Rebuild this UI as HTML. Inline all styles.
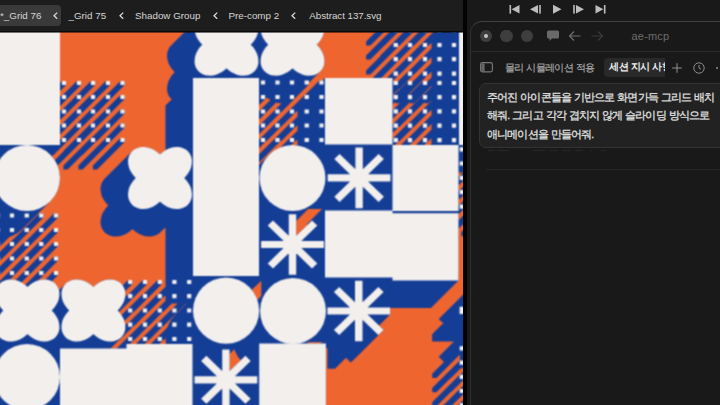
<!DOCTYPE html>
<html lang="ko">
<head>
<meta charset="utf-8">
<title>ae-mcp</title>
<style>
html,body{margin:0;padding:0;}
body{width:720px;height:405px;overflow:hidden;background:#191919;position:relative;font-family:"Liberation Sans",sans-serif;color:#e6e6e6;}
.abs{position:absolute;}
#topbar{left:0;top:0;width:463px;height:32px;background:#1d1d1d;}
#topline{left:0;top:31px;width:463px;height:1px;background:#090909;}
#topline2{left:0;top:32px;width:463px;height:1px;background:rgba(9,9,9,0.55);}
#topbar .tab{position:absolute;top:0;height:32px;line-height:32px;font-size:9.8px;color:#d6d6d6;white-space:nowrap;}
#topbar .chev{position:absolute;top:11.8px;width:5px;height:7.4px;}
#activetab{left:-6px;top:4.6px;width:66.7px;height:21.1px;border-radius:4px;background:#3a3a3a;}
.art{position:absolute;left:0;top:32px;display:block;}
#gutter{left:463px;top:0;width:3.9px;height:405px;background:#030303;}
#rtop{left:466.9px;top:0;width:254px;height:405px;background:#191919;}
#win{left:469.7px;top:20.7px;width:270px;height:400px;border:1px solid #303030;border-top-color:#424242;border-radius:12px;background:#191919;box-sizing:border-box;}
#hdrline{left:470px;top:51px;width:250px;height:1px;background:#2b2b2b;}
.tl{position:absolute;width:12.5px;height:12.5px;border-radius:50%;background:#3e3e3e;top:29.5px;}
#title{left:631.5px;top:29px;font-size:11px;line-height:14px;color:#6c6c6c;letter-spacing:0.2px;}
#tab1{left:505px;top:60.6px;font-size:9.6px;line-height:14px;color:#a6a6a6;white-space:nowrap;letter-spacing:-0.7px;word-spacing:0.8px;-webkit-text-stroke:0.2px #a6a6a6;}
#tab2bg{left:604px;top:58px;width:61.3px;height:19.2px;border-radius:4px 0 0 4px;background:#292929;overflow:hidden;}
#tab2{left:5.2px;top:2.4px;font-size:9.5px;line-height:14px;color:#f0f0f0;font-weight:bold;white-space:nowrap;letter-spacing:-0.6px;word-spacing:0.8px;}
#msg{left:479px;top:83px;width:260px;height:65px;border:1px solid #333;border-radius:7px;background:#222;box-sizing:border-box;}
#msgtext{left:487px;top:88px;width:240px;font-size:10.6px;line-height:18.25px;color:#e4e4e4;white-space:nowrap;letter-spacing:-0.86px;word-spacing:0.8px;-webkit-text-stroke:0.25px #e4e4e4;}
#faint{left:486px;top:169px;width:234px;height:1px;background:#272727;}
.fm{position:absolute;top:149.6px;height:1.6px;background:#282828;}
</style>
</head>
<body>
<div id="topbar" class="abs">
  <div id="activetab" class="abs"></div>
  <div class="tab" style="left:0px">*_Grid 76</div>
  <svg class="chev" style="left:52.6px" viewBox="0 0 5 7.4"><path d="M4.2 0.6L1 3.7L4.2 6.8" fill="none" stroke="#dcdcdc" stroke-width="1.25"/></svg>
  <div class="tab" style="left:68.5px">_Grid 75</div>
  <svg class="chev" style="left:118.6px" viewBox="0 0 5 7.4"><path d="M4.2 0.6L1 3.7L4.2 6.8" fill="none" stroke="#dcdcdc" stroke-width="1.25"/></svg>
  <div class="tab" style="left:135px">Shadow Group</div>
  <svg class="chev" style="left:212.6px" viewBox="0 0 5 7.4"><path d="M4.2 0.6L1 3.7L4.2 6.8" fill="none" stroke="#dcdcdc" stroke-width="1.25"/></svg>
  <div class="tab" style="left:228.5px">Pre-comp 2</div>
  <svg class="chev" style="left:290.6px" viewBox="0 0 5 7.4"><path d="M4.2 0.6L1 3.7L4.2 6.8" fill="none" stroke="#dcdcdc" stroke-width="1.25"/></svg>
  <div class="tab" style="left:309.3px;letter-spacing:-0.05px">Abstract 137.svg</div>
</div>
<svg class="art" width="463" height="373" viewBox="0 32 463 373">
<defs><filter id="soft" x="-5%" y="-5%" width="110%" height="110%" color-interpolation-filters="sRGB"><feConvolveMatrix order="3" kernelMatrix="1 2 1 2 4 2 1 2 1" divisor="16" edgeMode="duplicate" preserveAlpha="true"/></filter></defs>
<g filter="url(#soft)">
<rect x="-20" y="12" width="503" height="413" fill="#ee6530"/>
<g fill="#143d96" stroke="#143d96" stroke-linecap="round">
<path stroke="none" d="M-33.5 39.5 -6 12 60 12 60 145 32.5 172.5 -33.5 172.5ZM165.5 105.5 193 78 259 78 259 276 231.5 303.5 165.5 303.5ZM297.5 105.5 325 78 392.5 78 392.5 144.5 365 172 297.5 172ZM365 172.5 392.5 145 458.5 145 458.5 211 431 238.5 365 238.5ZM297.5 238 325 210.5 392.5 210.5 392.5 277.5 365 305 297.5 305ZM365 240.8 392.5 213.3 458.5 213.3 458.5 280.5 431 308 365 308ZM32.5 376 60 348.5 126.5 348.5 126.5 415 99 442.5 32.5 442.5ZM99 371.5 126.5 344 192.5 344 192.5 415 165 442.5 99 442.5ZM231.8 371.1 259.2 343.6 325.9 343.6 325.9 415 298.4 442.5 231.8 442.5ZM431.5 39.5 459 12 525 12 525 145 497.5 172.5 431.5 172.5ZM167.1 56.6 167.1 54 167.6 51.5 168.5 49.2 169.7 47.1 171.3 45.3 198.8 17.8 200.6 16.3 202.8 15.1 205.2 14.2 207.8 13.8 210.5 13.7 213.3 14 216.1 14.7 218.8 15.8 221.5 17.2 224 19 226.3 21 228.4 23.2 230.2 25.7 231.6 28.2 232.7 30.9 233.5 33.6 233.8 36.3 233.7 39 233.3 41.5 232.4 43.8 231.2 45.9 229.6 47.7 202.1 75.2 200.2 76.7 198.1 77.9 195.7 78.8 193.1 79.2 190.4 79.3 187.6 78.9 184.8 78.2 182 77.2 179.4 75.8 176.9 74 174.5 72 172.5 69.8 170.7 67.3 169.2 64.7 168.1 62.1 167.4 59.3ZM167.1 87.8 167.4 85.1 168.1 82.3 169.2 79.7 170.7 77.1 172.5 74.6 174.5 72.4 202 44.9 204.4 42.9 206.9 41.1 209.5 39.7 212.3 38.7 215.1 38 217.9 37.6 220.6 37.7 223.2 38.1 225.6 39 227.7 40.2 229.6 41.7 231.2 43.5 232.4 45.6 233.3 47.9 233.7 50.4 233.8 53.1 233.5 55.8 232.7 58.5 231.6 61.2 230.2 63.7 228.4 66.2 226.3 68.4 198.8 95.9 196.5 97.9 194 99.7 191.3 101.1 188.6 102.2 185.8 102.9 183 103.2 180.3 103.1 177.7 102.7 175.3 101.8 173.1 100.6 171.3 99.1 169.7 97.3 168.5 95.2 167.6 92.9 167.1 90.4ZM191.7 63.8 192 61.1 192.8 58.4 193.9 55.7 195.3 53.2 197.1 50.7 199.2 48.5 226.7 21 229 19 231.5 17.2 234.2 15.8 236.9 14.7 239.7 14 242.5 13.7 245.2 13.8 247.8 14.2 250.2 15.1 252.4 16.3 254.2 17.8 255.8 19.6 257 21.7 257.9 24 258.4 26.5 258.4 29.1 258.1 31.8 257.4 34.6 256.3 37.2 254.8 39.8 253 42.3 251 44.5 223.5 72 221.1 74 218.6 75.8 216 77.2 213.2 78.2 210.4 78.9 207.6 79.3 204.9 79.2 202.3 78.8 199.9 77.9 197.8 76.7 195.9 75.2 194.3 73.4 193.1 71.3 192.2 69 191.8 66.5ZM191.7 80.6 191.8 77.9 192.2 75.4 193.1 73.1 194.3 71 195.9 69.2 223.4 41.7 225.3 40.2 227.4 39 229.8 38.1 232.4 37.7 235.1 37.6 237.9 38 240.7 38.7 243.5 39.7 246.1 41.1 248.6 42.9 251 44.9 253 47.1 254.8 49.6 256.3 52.2 257.4 54.8 258.1 57.6 258.4 60.3 258.4 62.9 257.9 65.4 257 67.7 255.8 69.8 254.2 71.6 226.7 99.1 224.9 100.6 222.7 101.8 220.3 102.7 217.7 103.1 215 103.2 212.2 102.9 209.4 102.2 206.7 101.1 204 99.7 201.5 97.9 199.2 95.9 197.1 93.7 195.3 91.2 193.9 88.7 192.8 86 192 83.3ZM233.1 56.6 233.1 54 233.6 51.5 234.5 49.2 235.7 47.1 237.3 45.3 264.8 17.8 266.6 16.3 268.8 15.1 271.2 14.2 273.8 13.8 276.5 13.7 279.3 14 282.1 14.7 284.8 15.8 287.5 17.2 290 19 292.3 21 294.4 23.2 296.2 25.7 297.6 28.2 298.7 30.9 299.5 33.6 299.8 36.3 299.7 39 299.3 41.5 298.4 43.8 297.2 45.9 295.6 47.7 268.1 75.2 266.2 76.7 264.1 77.9 261.7 78.8 259.1 79.2 256.4 79.3 253.6 78.9 250.8 78.2 248 77.2 245.4 75.8 242.9 74 240.5 72 238.5 69.8 236.7 67.3 235.2 64.7 234.1 62.1 233.4 59.3ZM233.1 87.8 233.4 85.1 234.1 82.3 235.2 79.7 236.7 77.1 238.5 74.6 240.5 72.4 268 44.9 270.4 42.9 272.9 41.1 275.5 39.7 278.3 38.7 281.1 38 283.9 37.6 286.6 37.7 289.2 38.1 291.6 39 293.7 40.2 295.6 41.7 297.2 43.5 298.4 45.6 299.3 47.9 299.7 50.4 299.8 53.1 299.5 55.8 298.7 58.5 297.6 61.2 296.2 63.7 294.4 66.2 292.3 68.4 264.8 95.9 262.5 97.9 260 99.7 257.3 101.1 254.6 102.2 251.8 102.9 249 103.2 246.3 103.1 243.7 102.7 241.3 101.8 239.1 100.6 237.3 99.1 235.7 97.3 234.5 95.2 233.6 92.9 233.1 90.4ZM257.7 63.8 258 61.1 258.8 58.4 259.9 55.7 261.3 53.2 263.1 50.7 265.2 48.5 292.7 21 295 19 297.5 17.2 300.2 15.8 302.9 14.7 305.7 14 308.5 13.7 311.2 13.8 313.8 14.2 316.2 15.1 318.4 16.3 320.2 17.8 321.8 19.6 323 21.7 323.9 24 324.4 26.5 324.4 29.1 324.1 31.8 323.4 34.6 322.3 37.2 320.8 39.8 319 42.3 317 44.5 289.5 72 287.1 74 284.6 75.8 282 77.2 279.2 78.2 276.4 78.9 273.6 79.3 270.9 79.2 268.3 78.8 265.9 77.9 263.8 76.7 261.9 75.2 260.3 73.4 259.1 71.3 258.2 69 257.8 66.5ZM257.7 80.6 257.8 77.9 258.2 75.4 259.1 73.1 260.3 71 261.9 69.2 289.4 41.7 291.3 40.2 293.4 39 295.8 38.1 298.4 37.7 301.1 37.6 303.9 38 306.7 38.7 309.5 39.7 312.1 41.1 314.6 42.9 317 44.9 319 47.1 320.8 49.6 322.3 52.2 323.4 54.8 324.1 57.6 324.4 60.3 324.4 62.9 323.9 65.4 323 67.7 321.8 69.8 320.2 71.6 292.7 99.1 290.9 100.6 288.7 101.8 286.3 102.7 283.7 103.1 281 103.2 278.2 102.9 275.4 102.2 272.7 101.1 270 99.7 267.5 97.9 265.2 95.9 263.1 93.7 261.3 91.2 259.9 88.7 258.8 86 258 83.3ZM100.6 189.9 100.6 187.3 101.1 184.8 102 182.5 103.2 180.4 104.8 178.6 132.3 151.1 134.1 149.6 136.3 148.4 138.7 147.5 141.3 147.1 144 147 146.8 147.3 149.6 148 152.3 149.1 155 150.5 157.5 152.3 159.8 154.3 161.9 156.5 163.7 159 165.1 161.5 166.2 164.2 167 166.9 167.3 169.6 167.2 172.3 166.8 174.8 165.9 177.1 164.7 179.2 163.1 181 135.6 208.5 133.7 210 131.6 211.2 129.2 212.1 126.6 212.5 123.9 212.6 121.1 212.2 118.3 211.5 115.5 210.5 112.9 209.1 110.4 207.3 108 205.3 106 203.1 104.2 200.6 102.7 198 101.6 195.4 100.9 192.6ZM100.6 221.1 100.9 218.4 101.6 215.6 102.7 213 104.2 210.4 106 207.9 108 205.7 135.5 178.2 137.9 176.2 140.4 174.4 143 173 145.8 172 148.6 171.3 151.4 170.9 154.1 171 156.7 171.4 159.1 172.3 161.2 173.5 163.1 175 164.7 176.8 165.9 178.9 166.8 181.2 167.2 183.7 167.3 186.4 167 189.1 166.2 191.8 165.1 194.5 163.7 197 161.9 199.5 159.8 201.7 132.3 229.2 130 231.2 127.5 233 124.8 234.4 122.1 235.5 119.3 236.2 116.5 236.5 113.8 236.4 111.2 236 108.8 235.1 106.6 233.9 104.8 232.4 103.2 230.6 102 228.5 101.1 226.2 100.6 223.7ZM125.2 197.1 125.5 194.4 126.3 191.7 127.4 189 128.8 186.5 130.6 184 132.7 181.8 160.2 154.3 162.5 152.3 165 150.5 167.7 149.1 170.4 148 173.2 147.3 176 147 178.7 147.1 181.3 147.5 183.7 148.4 185.9 149.6 187.7 151.1 189.3 152.9 190.5 155 191.4 157.3 191.9 159.8 191.9 162.4 191.6 165.1 190.9 167.9 189.8 170.5 188.3 173.1 186.5 175.6 184.5 177.8 157 205.3 154.6 207.3 152.1 209.1 149.5 210.5 146.7 211.5 143.9 212.2 141.1 212.6 138.4 212.5 135.8 212.1 133.4 211.2 131.3 210 129.4 208.5 127.8 206.7 126.6 204.6 125.7 202.3 125.3 199.8ZM125.2 213.9 125.3 211.2 125.7 208.7 126.6 206.4 127.8 204.3 129.4 202.5 156.9 175 158.8 173.5 160.9 172.3 163.3 171.4 165.9 171 168.6 170.9 171.4 171.3 174.2 172 177 173 179.6 174.4 182.1 176.2 184.5 178.2 186.5 180.4 188.3 182.9 189.8 185.5 190.9 188.1 191.6 190.9 191.9 193.6 191.9 196.2 191.4 198.7 190.5 201 189.3 203.1 187.7 204.9 160.2 232.4 158.4 233.9 156.2 235.1 153.8 236 151.2 236.4 148.5 236.5 145.7 236.2 142.9 235.5 140.2 234.4 137.5 233 135 231.2 132.7 229.2 130.6 227 128.8 224.5 127.4 222 126.3 219.3 125.5 216.6ZM-31.9 322.4 -31.9 319.8 -31.4 317.3 -30.5 315 -29.3 312.9 -27.7 311.1 -0.2 283.6 1.6 282.1 3.8 280.9 6.2 280 8.8 279.6 11.5 279.5 14.3 279.8 17.1 280.5 19.8 281.6 22.5 283 25 284.8 27.3 286.8 29.4 289 31.2 291.5 32.6 294 33.7 296.7 34.5 299.4 34.8 302.1 34.7 304.8 34.3 307.3 33.4 309.6 32.2 311.7 30.6 313.5 3.1 341 1.2 342.5 -0.9 343.7 -3.3 344.6 -5.9 345 -8.6 345.1 -11.4 344.7 -14.2 344 -17 343 -19.6 341.6 -22.1 339.8 -24.5 337.8 -26.5 335.6 -28.3 333.1 -29.8 330.5 -30.9 327.9 -31.6 325.1ZM-31.9 353.6 -31.6 350.9 -30.9 348.1 -29.8 345.5 -28.3 342.9 -26.5 340.4 -24.5 338.2 3 310.7 5.4 308.7 7.9 306.9 10.5 305.5 13.3 304.5 16.1 303.8 18.9 303.4 21.6 303.5 24.2 303.9 26.6 304.8 28.7 306 30.6 307.5 32.2 309.3 33.4 311.4 34.3 313.7 34.7 316.2 34.8 318.9 34.5 321.6 33.7 324.3 32.6 327 31.2 329.5 29.4 332 27.3 334.2 -0.2 361.7 -2.5 363.7 -5 365.5 -7.7 366.9 -10.4 368 -13.2 368.7 -16 369 -18.7 368.9 -21.3 368.5 -23.7 367.6 -25.9 366.4 -27.7 364.9 -29.3 363.1 -30.5 361 -31.4 358.7 -31.9 356.2ZM-7.3 329.6 -7 326.9 -6.2 324.2 -5.1 321.5 -3.7 319 -1.9 316.5 0.2 314.3 27.7 286.8 30 284.8 32.5 283 35.2 281.6 37.9 280.5 40.7 279.8 43.5 279.5 46.2 279.6 48.8 280 51.2 280.9 53.4 282.1 55.2 283.6 56.8 285.4 58 287.5 58.9 289.8 59.4 292.3 59.4 294.9 59.1 297.6 58.4 300.4 57.3 303 55.8 305.6 54 308.1 52 310.3 24.5 337.8 22.1 339.8 19.6 341.6 17 343 14.2 344 11.4 344.7 8.6 345.1 5.9 345 3.3 344.6 0.9 343.7 -1.2 342.5 -3.1 341 -4.7 339.2 -5.9 337.1 -6.8 334.8 -7.2 332.3ZM-7.3 346.4 -7.2 343.7 -6.8 341.2 -5.9 338.9 -4.7 336.8 -3.1 335 24.4 307.5 26.3 306 28.4 304.8 30.8 303.9 33.4 303.5 36.1 303.4 38.9 303.8 41.7 304.5 44.5 305.5 47.1 306.9 49.6 308.7 52 310.7 54 312.9 55.8 315.4 57.3 318 58.4 320.6 59.1 323.4 59.4 326.1 59.4 328.7 58.9 331.2 58 333.5 56.8 335.6 55.2 337.4 27.7 364.9 25.9 366.4 23.7 367.6 21.3 368.5 18.7 368.9 16 369 13.2 368.7 10.4 368 7.7 366.9 5 365.5 2.5 363.7 0.2 361.7 -1.9 359.5 -3.7 357 -5.1 354.5 -6.2 351.8 -7 349.1ZM34 322.4 34 319.8 34.5 317.3 35.4 315 36.6 312.9 38.2 311.1 65.7 283.6 67.5 282.1 69.7 280.9 72.1 280 74.7 279.6 77.4 279.5 80.2 279.8 83 280.5 85.7 281.6 88.4 283 90.9 284.8 93.2 286.8 95.3 289 97.1 291.5 98.5 294 99.6 296.7 100.4 299.4 100.7 302.1 100.6 304.8 100.2 307.3 99.3 309.6 98.1 311.7 96.5 313.5 69 341 67.1 342.5 65 343.7 62.6 344.6 60 345 57.3 345.1 54.5 344.7 51.7 344 48.9 343 46.3 341.6 43.8 339.8 41.4 337.8 39.4 335.6 37.6 333.1 36.1 330.5 35 327.9 34.3 325.1ZM34 353.6 34.3 350.9 35 348.1 36.1 345.5 37.6 342.9 39.4 340.4 41.4 338.2 68.9 310.7 71.3 308.7 73.8 306.9 76.4 305.5 79.2 304.5 82 303.8 84.8 303.4 87.5 303.5 90.1 303.9 92.5 304.8 94.6 306 96.5 307.5 98.1 309.3 99.3 311.4 100.2 313.7 100.6 316.2 100.7 318.9 100.4 321.6 99.6 324.3 98.5 327 97.1 329.5 95.3 332 93.2 334.2 65.7 361.7 63.4 363.7 60.9 365.5 58.2 366.9 55.5 368 52.7 368.7 49.9 369 47.2 368.9 44.6 368.5 42.2 367.6 40 366.4 38.2 364.9 36.6 363.1 35.4 361 34.5 358.7 34 356.2ZM58.6 329.6 58.9 326.9 59.7 324.2 60.8 321.5 62.2 319 64 316.5 66.1 314.3 93.6 286.8 95.9 284.8 98.4 283 101.1 281.6 103.8 280.5 106.6 279.8 109.4 279.5 112.1 279.6 114.7 280 117.1 280.9 119.3 282.1 121.1 283.6 122.7 285.4 123.9 287.5 124.8 289.8 125.3 292.3 125.3 294.9 125 297.6 124.3 300.4 123.2 303 121.7 305.6 119.9 308.1 117.9 310.3 90.4 337.8 88 339.8 85.5 341.6 82.9 343 80.1 344 77.3 344.7 74.5 345.1 71.8 345 69.2 344.6 66.8 343.7 64.7 342.5 62.8 341 61.2 339.2 60 337.1 59.1 334.8 58.7 332.3ZM58.6 346.4 58.7 343.7 59.1 341.2 60 338.9 61.2 336.8 62.8 335 90.3 307.5 92.2 306 94.3 304.8 96.7 303.9 99.3 303.5 102 303.4 104.8 303.8 107.6 304.5 110.4 305.5 113 306.9 115.5 308.7 117.9 310.7 119.9 312.9 121.7 315.4 123.2 318 124.3 320.6 125 323.4 125.3 326.1 125.3 328.7 124.8 331.2 123.9 333.5 122.7 335.6 121.1 337.4 93.6 364.9 91.8 366.4 89.6 367.6 87.2 368.5 84.6 368.9 81.9 369 79.1 368.7 76.3 368 73.6 366.9 70.9 365.5 68.4 363.7 66.1 361.7 64 359.5 62.2 357 60.8 354.5 59.7 351.8 58.9 349.1ZM300.2 201.8 327.7 174.3 390.5 174.3 390.5 181.5 363 209 300.2 209ZM306.8 186.5 334.3 159 339.6 153.9 383.9 196.8 356.4 224.3 351.1 229.4ZM327.9 175.1 355.4 147.6 362.8 147.6 362.8 208.2 335.3 235.7 327.9 235.7ZM306.8 224.3 334.3 196.8 378.6 153.9 383.9 159 356.4 186.5 312.1 229.4ZM233.6 268.4 261.1 240.9 323.9 240.9 323.9 248.1 296.4 275.6 233.6 275.6ZM240.2 253.1 267.7 225.6 273 220.5 317.3 263.4 289.8 290.9 284.5 296ZM261.3 241.7 288.8 214.2 296.2 214.2 296.2 274.8 268.7 302.3 261.3 302.3ZM240.2 290.9 267.7 263.4 312 220.5 317.3 225.6 289.8 253.1 245.5 296ZM299.9 334.9 327.4 307.4 390.1 307.4 390.1 314.6 362.6 342.1 299.9 342.1ZM306.4 319.6 333.9 292.1 339.2 287 383.6 329.9 356.1 357.4 350.8 362.5ZM327.5 308.2 355 280.7 362.5 280.7 362.5 341.3 335 368.8 327.5 368.8ZM306.4 357.4 333.9 329.9 378.3 287 383.6 292.1 356.1 319.6 311.7 362.5ZM167 403.7 194.5 376.2 257.3 376.2 257.3 383.4 229.8 410.9 167 410.9ZM173.6 388.4 201.1 360.9 206.4 355.8 250.7 398.7 223.2 426.2 217.9 431.3ZM194.7 377 222.2 349.5 229.6 349.5 229.6 410.1 202.1 437.6 194.7 437.6ZM173.6 426.2 201.1 398.7 245.4 355.8 250.7 360.9 223.2 388.4 178.9 431.3ZM432.1 334.3 459.6 306.8 522.4 306.8 522.4 314 494.9 341.5 432.1 341.5ZM438.7 319 466.2 291.5 471.5 286.4 515.8 329.3 488.3 356.8 483 361.9ZM459.8 307.6 487.3 280.1 494.7 280.1 494.7 340.7 467.2 368.2 459.8 368.2ZM438.7 356.8 466.2 329.3 510.5 286.4 515.8 291.5 488.3 319 444 361.9ZM34.4 108.4 61.9 80.9 66.1 80.9 66.1 85.1 38.6 112.6 34.4 112.6ZM49.4 108.4 76.9 80.9 81.1 80.9 81.1 85.1 53.6 112.6 49.4 112.6ZM63.4 108.4 90.9 80.9 95.1 80.9 95.1 85.1 67.6 112.6 63.4 112.6ZM78.4 108.4 105.9 80.9 110.1 80.9 110.1 85.1 82.6 112.6 78.4 112.6ZM92.9 108.4 120.4 80.9 124.6 80.9 124.6 85.1 97.1 112.6 92.9 112.6ZM34.4 122.4 61.9 94.9 66.1 94.9 66.1 99.1 38.6 126.6 34.4 126.6ZM49.4 122.4 76.9 94.9 81.1 94.9 81.1 99.1 53.6 126.6 49.4 126.6ZM63.4 122.4 90.9 94.9 95.1 94.9 95.1 99.1 67.6 126.6 63.4 126.6ZM78.4 122.4 105.9 94.9 110.1 94.9 110.1 99.1 82.6 126.6 78.4 126.6ZM92.9 122.4 120.4 94.9 124.6 94.9 124.6 99.1 97.1 126.6 92.9 126.6ZM34.4 136.9 61.9 109.4 66.1 109.4 66.1 113.6 38.6 141.1 34.4 141.1ZM49.4 136.9 76.9 109.4 81.1 109.4 81.1 113.6 53.6 141.1 49.4 141.1ZM63.4 136.9 90.9 109.4 95.1 109.4 95.1 113.6 67.6 141.1 63.4 141.1ZM78.4 136.9 105.9 109.4 110.1 109.4 110.1 113.6 82.6 141.1 78.4 141.1ZM92.9 136.9 120.4 109.4 124.6 109.4 124.6 113.6 97.1 141.1 92.9 141.1ZM34.4 150.9 61.9 123.4 66.1 123.4 66.1 127.6 38.6 155.1 34.4 155.1ZM49.4 150.9 76.9 123.4 81.1 123.4 81.1 127.6 53.6 155.1 49.4 155.1ZM63.4 150.9 90.9 123.4 95.1 123.4 95.1 127.6 67.6 155.1 63.4 155.1ZM78.4 150.9 105.9 123.4 110.1 123.4 110.1 127.6 82.6 155.1 78.4 155.1ZM92.9 150.9 120.4 123.4 124.6 123.4 124.6 127.6 97.1 155.1 92.9 155.1ZM34.4 165.4 61.9 137.9 66.1 137.9 66.1 142.1 38.6 169.6 34.4 169.6ZM49.4 165.4 76.9 137.9 81.1 137.9 81.1 142.1 53.6 169.6 49.4 169.6ZM63.4 165.4 90.9 137.9 95.1 137.9 95.1 142.1 67.6 169.6 63.4 169.6ZM78.4 165.4 105.9 137.9 110.1 137.9 110.1 142.1 82.6 169.6 78.4 169.6ZM92.9 165.4 120.4 137.9 124.6 137.9 124.6 142.1 97.1 169.6 92.9 169.6ZM233.4 107.9 260.9 80.4 265.1 80.4 265.1 84.6 237.6 112.1 233.4 112.1ZM247.9 107.9 275.4 80.4 279.6 80.4 279.6 84.6 252.1 112.1 247.9 112.1ZM262.4 107.9 289.9 80.4 294.1 80.4 294.1 84.6 266.6 112.1 262.4 112.1ZM277.1 107.9 304.6 80.4 308.9 80.4 308.9 84.6 281.4 112.1 277.1 112.1ZM291.9 107.9 319.4 80.4 323.6 80.4 323.6 84.6 296.1 112.1 291.9 112.1ZM233.4 122.4 260.9 94.9 265.1 94.9 265.1 99.1 237.6 126.6 233.4 126.6ZM247.9 122.4 275.4 94.9 279.6 94.9 279.6 99.1 252.1 126.6 247.9 126.6ZM262.4 122.4 289.9 94.9 294.1 94.9 294.1 99.1 266.6 126.6 262.4 126.6ZM277.1 122.4 304.6 94.9 308.9 94.9 308.9 99.1 281.4 126.6 277.1 126.6ZM291.9 122.4 319.4 94.9 323.6 94.9 323.6 99.1 296.1 126.6 291.9 126.6ZM233.4 136.9 260.9 109.4 265.1 109.4 265.1 113.6 237.6 141.1 233.4 141.1ZM247.9 136.9 275.4 109.4 279.6 109.4 279.6 113.6 252.1 141.1 247.9 141.1ZM262.4 136.9 289.9 109.4 294.1 109.4 294.1 113.6 266.6 141.1 262.4 141.1ZM277.1 136.9 304.6 109.4 308.9 109.4 308.9 113.6 281.4 141.1 277.1 141.1ZM291.9 136.9 319.4 109.4 323.6 109.4 323.6 113.6 296.1 141.1 291.9 141.1ZM233.4 150.9 260.9 123.4 265.1 123.4 265.1 127.6 237.6 155.1 233.4 155.1ZM247.9 150.9 275.4 123.4 279.6 123.4 279.6 127.6 252.1 155.1 247.9 155.1ZM262.4 150.9 289.9 123.4 294.1 123.4 294.1 127.6 266.6 155.1 262.4 155.1ZM277.1 150.9 304.6 123.4 308.9 123.4 308.9 127.6 281.4 155.1 277.1 155.1ZM291.9 150.9 319.4 123.4 323.6 123.4 323.6 127.6 296.1 155.1 291.9 155.1ZM233.4 165.4 260.9 137.9 265.1 137.9 265.1 142.1 237.6 169.6 233.4 169.6ZM247.9 165.4 275.4 137.9 279.6 137.9 279.6 142.1 252.1 169.6 247.9 169.6ZM262.4 165.4 289.9 137.9 294.1 137.9 294.1 142.1 266.6 169.6 262.4 169.6ZM277.1 165.4 304.6 137.9 308.9 137.9 308.9 142.1 281.4 169.6 277.1 169.6ZM291.9 165.4 319.4 137.9 323.6 137.9 323.6 142.1 296.1 169.6 291.9 169.6ZM366.1 41.4 393.6 13.9 397.9 13.9 397.9 18.1 370.4 45.6 366.1 45.6ZM380.4 41.4 407.9 13.9 412.1 13.9 412.1 18.1 384.6 45.6 380.4 45.6ZM395.4 41.4 422.9 13.9 427.1 13.9 427.1 18.1 399.6 45.6 395.4 45.6ZM409.9 41.4 437.4 13.9 441.6 13.9 441.6 18.1 414.1 45.6 409.9 45.6ZM424.4 41.4 451.9 13.9 456.1 13.9 456.1 18.1 428.6 45.6 424.4 45.6ZM366.1 55.4 393.6 27.9 397.9 27.9 397.9 32.1 370.4 59.6 366.1 59.6ZM380.4 55.4 407.9 27.9 412.1 27.9 412.1 32.1 384.6 59.6 380.4 59.6ZM395.4 55.4 422.9 27.9 427.1 27.9 427.1 32.1 399.6 59.6 395.4 59.6ZM409.9 55.4 437.4 27.9 441.6 27.9 441.6 32.1 414.1 59.6 409.9 59.6ZM424.4 55.4 451.9 27.9 456.1 27.9 456.1 32.1 428.6 59.6 424.4 59.6ZM366.1 70.4 393.6 42.9 397.9 42.9 397.9 47.1 370.4 74.6 366.1 74.6ZM380.4 70.4 407.9 42.9 412.1 42.9 412.1 47.1 384.6 74.6 380.4 74.6ZM395.4 70.4 422.9 42.9 427.1 42.9 427.1 47.1 399.6 74.6 395.4 74.6ZM409.9 70.4 437.4 42.9 441.6 42.9 441.6 47.1 414.1 74.6 409.9 74.6ZM424.4 70.4 451.9 42.9 456.1 42.9 456.1 47.1 428.6 74.6 424.4 74.6ZM366.1 84.6 393.6 57.1 397.9 57.1 397.9 61.3 370.4 88.8 366.1 88.8ZM380.4 84.6 407.9 57.1 412.1 57.1 412.1 61.3 384.6 88.8 380.4 88.8ZM395.4 84.6 422.9 57.1 427.1 57.1 427.1 61.3 399.6 88.8 395.4 88.8ZM409.9 84.6 437.4 57.1 441.6 57.1 441.6 61.3 414.1 88.8 409.9 88.8ZM424.4 84.6 451.9 57.1 456.1 57.1 456.1 61.3 428.6 88.8 424.4 88.8ZM366.1 99 393.6 71.5 397.9 71.5 397.9 75.7 370.4 103.2 366.1 103.2ZM380.4 99 407.9 71.5 412.1 71.5 412.1 75.7 384.6 103.2 380.4 103.2ZM395.4 99 422.9 71.5 427.1 71.5 427.1 75.7 399.6 103.2 395.4 103.2ZM409.9 99 437.4 71.5 441.6 71.5 441.6 75.7 414.1 103.2 409.9 103.2ZM424.4 99 451.9 71.5 456.1 71.5 456.1 75.7 428.6 103.2 424.4 103.2ZM366.1 108.4 393.6 80.9 397.9 80.9 397.9 85.1 370.4 112.6 366.1 112.6ZM380.4 108.4 407.9 80.9 412.1 80.9 412.1 85.1 384.6 112.6 380.4 112.6ZM395.4 108.4 422.9 80.9 427.1 80.9 427.1 85.1 399.6 112.6 395.4 112.6ZM409.9 108.4 437.4 80.9 441.6 80.9 441.6 85.1 414.1 112.6 409.9 112.6ZM424.4 108.4 451.9 80.9 456.1 80.9 456.1 85.1 428.6 112.6 424.4 112.6ZM366.1 122.6 393.6 95.1 397.9 95.1 397.9 99.3 370.4 126.8 366.1 126.8ZM380.4 122.6 407.9 95.1 412.1 95.1 412.1 99.3 384.6 126.8 380.4 126.8ZM395.4 122.6 422.9 95.1 427.1 95.1 427.1 99.3 399.6 126.8 395.4 126.8ZM409.9 122.6 437.4 95.1 441.6 95.1 441.6 99.3 414.1 126.8 409.9 126.8ZM424.4 122.6 451.9 95.1 456.1 95.1 456.1 99.3 428.6 126.8 424.4 126.8ZM366.1 136.8 393.6 109.3 397.9 109.3 397.9 113.5 370.4 141 366.1 141ZM380.4 136.8 407.9 109.3 412.1 109.3 412.1 113.5 384.6 141 380.4 141ZM395.4 136.8 422.9 109.3 427.1 109.3 427.1 113.5 399.6 141 395.4 141ZM409.9 136.8 437.4 109.3 441.6 109.3 441.6 113.5 414.1 141 409.9 141ZM424.4 136.8 451.9 109.3 456.1 109.3 456.1 113.5 428.6 141 424.4 141ZM366.1 151.1 393.6 123.6 397.9 123.6 397.9 127.8 370.4 155.3 366.1 155.3ZM380.4 151.1 407.9 123.6 412.1 123.6 412.1 127.8 384.6 155.3 380.4 155.3ZM395.4 151.1 422.9 123.6 427.1 123.6 427.1 127.8 399.6 155.3 395.4 155.3ZM409.9 151.1 437.4 123.6 441.6 123.6 441.6 127.8 414.1 155.3 409.9 155.3ZM424.4 151.1 451.9 123.6 456.1 123.6 456.1 127.8 428.6 155.3 424.4 155.3ZM366.1 165.6 393.6 138.1 397.9 138.1 397.9 142.3 370.4 169.8 366.1 169.8ZM380.4 165.6 407.9 138.1 412.1 138.1 412.1 142.3 384.6 169.8 380.4 169.8ZM395.4 165.6 422.9 138.1 427.1 138.1 427.1 142.3 399.6 169.8 395.4 169.8ZM409.9 165.6 437.4 138.1 441.6 138.1 441.6 142.3 414.1 169.8 409.9 169.8ZM424.4 165.6 451.9 138.1 456.1 138.1 456.1 142.3 428.6 169.8 424.4 169.8ZM-32.1 240.9 -4.6 213.4 -0.4 213.4 -0.4 217.6 -27.9 245.1 -32.1 245.1ZM-17.6 240.9 9.9 213.4 14.1 213.4 14.1 217.6 -13.4 245.1 -17.6 245.1ZM-2.9 240.9 24.6 213.4 28.9 213.4 28.9 217.6 1.4 245.1 -2.9 245.1ZM11.7 240.9 39.1 213.4 43.4 213.4 43.4 217.6 15.8 245.1 11.7 245.1ZM26.4 240.9 53.9 213.4 58.1 213.4 58.1 217.6 30.6 245.1 26.4 245.1ZM-32.1 255.4 -4.6 227.9 -0.4 227.9 -0.4 232.1 -27.9 259.6 -32.1 259.6ZM-17.6 255.4 9.9 227.9 14.1 227.9 14.1 232.1 -13.4 259.6 -17.6 259.6ZM-2.9 255.4 24.6 227.9 28.9 227.9 28.9 232.1 1.4 259.6 -2.9 259.6ZM11.7 255.4 39.1 227.9 43.4 227.9 43.4 232.1 15.8 259.6 11.7 259.6ZM26.4 255.4 53.9 227.9 58.1 227.9 58.1 232.1 30.6 259.6 26.4 259.6ZM-32.1 269.4 -4.6 241.9 -0.4 241.9 -0.4 246.1 -27.9 273.6 -32.1 273.6ZM-17.6 269.4 9.9 241.9 14.1 241.9 14.1 246.1 -13.4 273.6 -17.6 273.6ZM-2.9 269.4 24.6 241.9 28.9 241.9 28.9 246.1 1.4 273.6 -2.9 273.6ZM11.7 269.4 39.1 241.9 43.4 241.9 43.4 246.1 15.8 273.6 11.7 273.6ZM26.4 269.4 53.9 241.9 58.1 241.9 58.1 246.1 30.6 273.6 26.4 273.6ZM-32.1 283.9 -4.6 256.4 -0.4 256.4 -0.4 260.6 -27.9 288.1 -32.1 288.1ZM-17.6 283.9 9.9 256.4 14.1 256.4 14.1 260.6 -13.4 288.1 -17.6 288.1ZM-2.9 283.9 24.6 256.4 28.9 256.4 28.9 260.6 1.4 288.1 -2.9 288.1ZM11.7 283.9 39.1 256.4 43.4 256.4 43.4 260.6 15.8 288.1 11.7 288.1ZM26.4 283.9 53.9 256.4 58.1 256.4 58.1 260.6 30.6 288.1 26.4 288.1ZM-32.1 298.4 -4.6 270.9 -0.4 270.9 -0.4 275.1 -27.9 302.6 -32.1 302.6ZM-17.6 298.4 9.9 270.9 14.1 270.9 14.1 275.1 -13.4 302.6 -17.6 302.6ZM-2.9 298.4 24.6 270.9 28.9 270.9 28.9 275.1 1.4 302.6 -2.9 302.6ZM11.7 298.4 39.1 270.9 43.4 270.9 43.4 275.1 15.8 302.6 11.7 302.6ZM26.4 298.4 53.9 270.9 58.1 270.9 58.1 275.1 30.6 302.6 26.4 302.6ZM100.6 307.4 128.1 279.9 132.3 279.9 132.3 284.1 104.8 311.6 100.6 311.6ZM115.4 307.4 142.9 279.9 147.1 279.9 147.1 284.1 119.6 311.6 115.4 311.6ZM130.2 307.4 157.7 279.9 161.9 279.9 161.9 284.1 134.4 311.6 130.2 311.6ZM144.8 307.4 172.3 279.9 176.5 279.9 176.5 284.1 149 311.6 144.8 311.6ZM159.6 307.4 187.1 279.9 191.3 279.9 191.3 284.1 163.8 311.6 159.6 311.6ZM100.6 321.6 128.1 294.1 132.3 294.1 132.3 298.3 104.8 325.8 100.6 325.8ZM115.4 321.6 142.9 294.1 147.1 294.1 147.1 298.3 119.6 325.8 115.4 325.8ZM130.2 321.6 157.7 294.1 161.9 294.1 161.9 298.3 134.4 325.8 130.2 325.8ZM144.8 321.6 172.3 294.1 176.5 294.1 176.5 298.3 149 325.8 144.8 325.8ZM159.6 321.6 187.1 294.1 191.3 294.1 191.3 298.3 163.8 325.8 159.6 325.8ZM100.6 335.9 128.1 308.4 132.3 308.4 132.3 312.6 104.8 340.1 100.6 340.1ZM115.4 335.9 142.9 308.4 147.1 308.4 147.1 312.6 119.6 340.1 115.4 340.1ZM130.2 335.9 157.7 308.4 161.9 308.4 161.9 312.6 134.4 340.1 130.2 340.1ZM144.8 335.9 172.3 308.4 176.5 308.4 176.5 312.6 149 340.1 144.8 340.1ZM159.6 335.9 187.1 308.4 191.3 308.4 191.3 312.6 163.8 340.1 159.6 340.1ZM100.6 350 128.1 322.5 132.3 322.5 132.3 326.7 104.8 354.2 100.6 354.2ZM115.4 350 142.9 322.5 147.1 322.5 147.1 326.7 119.6 354.2 115.4 354.2ZM130.2 350 157.7 322.5 161.9 322.5 161.9 326.7 134.4 354.2 130.2 354.2ZM144.8 350 172.3 322.5 176.5 322.5 176.5 326.7 149 354.2 144.8 354.2ZM159.6 350 187.1 322.5 191.3 322.5 191.3 326.7 163.8 354.2 159.6 354.2ZM100.6 364.4 128.1 336.9 132.3 336.9 132.3 341.1 104.8 368.6 100.6 368.6ZM115.4 364.4 142.9 336.9 147.1 336.9 147.1 341.1 119.6 368.6 115.4 368.6ZM130.2 364.4 157.7 336.9 161.9 336.9 161.9 341.1 134.4 368.6 130.2 368.6ZM144.8 364.4 172.3 336.9 176.5 336.9 176.5 341.1 149 368.6 144.8 368.6ZM159.6 364.4 187.1 336.9 191.3 336.9 191.3 341.1 163.8 368.6 159.6 368.6ZM432.2 174.7 459.7 147.2 463.9 147.2 463.9 151.4 436.4 178.9 432.2 178.9ZM446.8 174.7 474.3 147.2 478.5 147.2 478.5 151.4 451 178.9 446.8 178.9ZM461.4 174.7 488.9 147.2 493.1 147.2 493.1 151.4 465.6 178.9 461.4 178.9ZM475.9 174.7 503.4 147.2 507.6 147.2 507.6 151.4 480.1 178.9 475.9 178.9ZM490.4 174.7 517.9 147.2 522.1 147.2 522.1 151.4 494.6 178.9 490.4 178.9ZM432.2 188.9 459.7 161.4 463.9 161.4 463.9 165.6 436.4 193.1 432.2 193.1ZM446.8 188.9 474.3 161.4 478.5 161.4 478.5 165.6 451 193.1 446.8 193.1ZM461.4 188.9 488.9 161.4 493.1 161.4 493.1 165.6 465.6 193.1 461.4 193.1ZM475.9 188.9 503.4 161.4 507.6 161.4 507.6 165.6 480.1 193.1 475.9 193.1ZM490.4 188.9 517.9 161.4 522.1 161.4 522.1 165.6 494.6 193.1 490.4 193.1ZM432.2 203.2 459.7 175.7 463.9 175.7 463.9 179.9 436.4 207.4 432.2 207.4ZM446.8 203.2 474.3 175.7 478.5 175.7 478.5 179.9 451 207.4 446.8 207.4ZM461.4 203.2 488.9 175.7 493.1 175.7 493.1 179.9 465.6 207.4 461.4 207.4ZM475.9 203.2 503.4 175.7 507.6 175.7 507.6 179.9 480.1 207.4 475.9 207.4ZM490.4 203.2 517.9 175.7 522.1 175.7 522.1 179.9 494.6 207.4 490.4 207.4ZM432.2 217.6 459.7 190.1 463.9 190.1 463.9 194.3 436.4 221.8 432.2 221.8ZM446.8 217.6 474.3 190.1 478.5 190.1 478.5 194.3 451 221.8 446.8 221.8ZM461.4 217.6 488.9 190.1 493.1 190.1 493.1 194.3 465.6 221.8 461.4 221.8ZM475.9 217.6 503.4 190.1 507.6 190.1 507.6 194.3 480.1 221.8 475.9 221.8ZM490.4 217.6 517.9 190.1 522.1 190.1 522.1 194.3 494.6 221.8 490.4 221.8ZM432.2 232 459.7 204.5 463.9 204.5 463.9 208.7 436.4 236.2 432.2 236.2ZM446.8 232 474.3 204.5 478.5 204.5 478.5 208.7 451 236.2 446.8 236.2ZM461.4 232 488.9 204.5 493.1 204.5 493.1 208.7 465.6 236.2 461.4 236.2ZM475.9 232 503.4 204.5 507.6 204.5 507.6 208.7 480.1 236.2 475.9 236.2ZM490.4 232 517.9 204.5 522.1 204.5 522.1 208.7 494.6 236.2 490.4 236.2ZM432.2 373.8 459.7 346.3 463.9 346.3 463.9 350.5 436.4 378 432.2 378ZM446.8 373.8 474.3 346.3 478.5 346.3 478.5 350.5 451 378 446.8 378ZM461.4 373.8 488.9 346.3 493.1 346.3 493.1 350.5 465.6 378 461.4 378ZM475.9 373.8 503.4 346.3 507.6 346.3 507.6 350.5 480.1 378 475.9 378ZM490.4 373.8 517.9 346.3 522.1 346.3 522.1 350.5 494.6 378 490.4 378ZM432.2 388.1 459.7 360.6 463.9 360.6 463.9 364.8 436.4 392.3 432.2 392.3ZM446.8 388.1 474.3 360.6 478.5 360.6 478.5 364.8 451 392.3 446.8 392.3ZM461.4 388.1 488.9 360.6 493.1 360.6 493.1 364.8 465.6 392.3 461.4 392.3ZM475.9 388.1 503.4 360.6 507.6 360.6 507.6 364.8 480.1 392.3 475.9 392.3ZM490.4 388.1 517.9 360.6 522.1 360.6 522.1 364.8 494.6 392.3 490.4 392.3ZM432.2 402.2 459.7 374.7 463.9 374.7 463.9 378.9 436.4 406.4 432.2 406.4ZM446.8 402.2 474.3 374.7 478.5 374.7 478.5 378.9 451 406.4 446.8 406.4ZM461.4 402.2 488.9 374.7 493.1 374.7 493.1 378.9 465.6 406.4 461.4 406.4ZM475.9 402.2 503.4 374.7 507.6 374.7 507.6 378.9 480.1 406.4 475.9 406.4ZM490.4 402.2 517.9 374.7 522.1 374.7 522.1 378.9 494.6 406.4 490.4 406.4ZM432.2 416.4 459.7 388.9 463.9 388.9 463.9 393.1 436.4 420.6 432.2 420.6ZM446.8 416.4 474.3 388.9 478.5 388.9 478.5 393.1 451 420.6 446.8 420.6ZM461.4 416.4 488.9 388.9 493.1 388.9 493.1 393.1 465.6 420.6 461.4 420.6ZM475.9 416.4 503.4 388.9 507.6 388.9 507.6 393.1 480.1 420.6 475.9 420.6ZM490.4 416.4 517.9 388.9 522.1 388.9 522.1 393.1 494.6 420.6 490.4 420.6ZM432.2 430.7 459.7 403.2 463.9 403.2 463.9 407.4 436.4 434.9 432.2 434.9ZM446.8 430.7 474.3 403.2 478.5 403.2 478.5 407.4 451 434.9 446.8 434.9ZM461.4 430.7 488.9 403.2 493.1 403.2 493.1 407.4 465.6 434.9 461.4 434.9ZM475.9 430.7 503.4 403.2 507.6 403.2 507.6 407.4 480.1 434.9 475.9 434.9ZM490.4 430.7 517.9 403.2 522.1 403.2 522.1 407.4 494.6 434.9 490.4 434.9Z"/>
<line x1="27" y1="178" x2="-0.5" y2="205.5" stroke-width="66"/>
<line x1="292.5" y1="178" x2="265" y2="205.5" stroke-width="66"/>
<line x1="226.1" y1="310.7" x2="198.6" y2="338.2" stroke-width="66.2"/>
<line x1="293" y1="311" x2="265.5" y2="338.5" stroke-width="66"/>
<line x1="27" y1="377" x2="-0.5" y2="404.5" stroke-width="66"/>
</g>
<g fill="#f2efec">
<path d="M-6 12 60 12 60 145 -6 145ZM193 78 259 78 259 276 193 276ZM325 78 392.5 78 392.5 144.5 325 144.5ZM392.5 145 458.5 145 458.5 211 392.5 211ZM325 210.5 392.5 210.5 392.5 277.5 325 277.5ZM392.5 213.3 458.5 213.3 458.5 280.5 392.5 280.5ZM60 348.5 126.5 348.5 126.5 415 60 415ZM126.5 344 192.5 344 192.5 415 126.5 415ZM259.2 343.6 325.9 343.6 325.9 415 259.2 415ZM459 12 525 12 525 145 459 145ZM198.8 17.8 200.6 16.3 202.8 15.1 205.2 14.2 207.8 13.8 210.5 13.7 213.3 14 216.1 14.7 218.8 15.8 221.5 17.2 224 19 226.3 21 228.4 23.2 230.2 25.7 231.6 28.2 232.7 30.9 233.5 33.6 233.8 36.3 233.7 39 233.3 41.5 232.4 43.8 231.2 45.9 229.6 47.7 227.7 49.2 225.6 50.4 223.2 51.3 220.6 51.7 217.9 51.8 215.1 51.4 212.3 50.7 209.5 49.7 206.9 48.3 204.4 46.5 202 44.5 200 42.3 198.2 39.8 196.7 37.2 195.6 34.6 194.9 31.8 194.6 29.1 194.6 26.5 195.1 24 196 21.7 197.2 19.6ZM198.8 71.6 197.2 69.8 196 67.7 195.1 65.4 194.6 62.9 194.6 60.3 194.9 57.6 195.6 54.8 196.7 52.2 198.2 49.6 200 47.1 202 44.9 204.4 42.9 206.9 41.1 209.5 39.7 212.3 38.7 215.1 38 217.9 37.6 220.6 37.7 223.2 38.1 225.6 39 227.7 40.2 229.6 41.7 231.2 43.5 232.4 45.6 233.3 47.9 233.7 50.4 233.8 53.1 233.5 55.8 232.7 58.5 231.6 61.2 230.2 63.7 228.4 66.2 226.3 68.4 224 70.4 221.5 72.2 218.8 73.6 216.1 74.7 213.3 75.4 210.5 75.7 207.8 75.6 205.2 75.2 202.8 74.3 200.6 73.1ZM254.2 17.8 255.8 19.6 257 21.7 257.9 24 258.4 26.5 258.4 29.1 258.1 31.8 257.4 34.6 256.3 37.2 254.8 39.8 253 42.3 251 44.5 248.6 46.5 246.1 48.3 243.5 49.7 240.7 50.7 237.9 51.4 235.1 51.8 232.4 51.7 229.8 51.3 227.4 50.4 225.3 49.2 223.4 47.7 221.8 45.9 220.6 43.8 219.7 41.5 219.3 39 219.2 36.3 219.5 33.6 220.3 30.9 221.4 28.2 222.8 25.7 224.6 23.2 226.7 21 229 19 231.5 17.2 234.2 15.8 236.9 14.7 239.7 14 242.5 13.7 245.2 13.8 247.8 14.2 250.2 15.1 252.4 16.3ZM254.2 71.6 252.4 73.1 250.2 74.3 247.8 75.2 245.2 75.6 242.5 75.7 239.7 75.4 236.9 74.7 234.2 73.6 231.5 72.2 229 70.4 226.7 68.4 224.6 66.2 222.8 63.7 221.4 61.2 220.3 58.5 219.5 55.8 219.2 53.1 219.3 50.4 219.7 47.9 220.6 45.6 221.8 43.5 223.4 41.7 225.3 40.2 227.4 39 229.8 38.1 232.4 37.7 235.1 37.6 237.9 38 240.7 38.7 243.5 39.7 246.1 41.1 248.6 42.9 251 44.9 253 47.1 254.8 49.6 256.3 52.2 257.4 54.8 258.1 57.6 258.4 60.3 258.4 62.9 257.9 65.4 257 67.7 255.8 69.8ZM264.8 17.8 266.6 16.3 268.8 15.1 271.2 14.2 273.8 13.8 276.5 13.7 279.3 14 282.1 14.7 284.8 15.8 287.5 17.2 290 19 292.3 21 294.4 23.2 296.2 25.7 297.6 28.2 298.7 30.9 299.5 33.6 299.8 36.3 299.7 39 299.3 41.5 298.4 43.8 297.2 45.9 295.6 47.7 293.7 49.2 291.6 50.4 289.2 51.3 286.6 51.7 283.9 51.8 281.1 51.4 278.3 50.7 275.5 49.7 272.9 48.3 270.4 46.5 268 44.5 266 42.3 264.2 39.8 262.7 37.2 261.6 34.6 260.9 31.8 260.6 29.1 260.6 26.5 261.1 24 262 21.7 263.2 19.6ZM264.8 71.6 263.2 69.8 262 67.7 261.1 65.4 260.6 62.9 260.6 60.3 260.9 57.6 261.6 54.8 262.7 52.2 264.2 49.6 266 47.1 268 44.9 270.4 42.9 272.9 41.1 275.5 39.7 278.3 38.7 281.1 38 283.9 37.6 286.6 37.7 289.2 38.1 291.6 39 293.7 40.2 295.6 41.7 297.2 43.5 298.4 45.6 299.3 47.9 299.7 50.4 299.8 53.1 299.5 55.8 298.7 58.5 297.6 61.2 296.2 63.7 294.4 66.2 292.3 68.4 290 70.4 287.5 72.2 284.8 73.6 282.1 74.7 279.3 75.4 276.5 75.7 273.8 75.6 271.2 75.2 268.8 74.3 266.6 73.1ZM320.2 17.8 321.8 19.6 323 21.7 323.9 24 324.4 26.5 324.4 29.1 324.1 31.8 323.4 34.6 322.3 37.2 320.8 39.8 319 42.3 317 44.5 314.6 46.5 312.1 48.3 309.5 49.7 306.7 50.7 303.9 51.4 301.1 51.8 298.4 51.7 295.8 51.3 293.4 50.4 291.3 49.2 289.4 47.7 287.8 45.9 286.6 43.8 285.7 41.5 285.3 39 285.2 36.3 285.5 33.6 286.3 30.9 287.4 28.2 288.8 25.7 290.6 23.2 292.7 21 295 19 297.5 17.2 300.2 15.8 302.9 14.7 305.7 14 308.5 13.7 311.2 13.8 313.8 14.2 316.2 15.1 318.4 16.3ZM320.2 71.6 318.4 73.1 316.2 74.3 313.8 75.2 311.2 75.6 308.5 75.7 305.7 75.4 302.9 74.7 300.2 73.6 297.5 72.2 295 70.4 292.7 68.4 290.6 66.2 288.8 63.7 287.4 61.2 286.3 58.5 285.5 55.8 285.2 53.1 285.3 50.4 285.7 47.9 286.6 45.6 287.8 43.5 289.4 41.7 291.3 40.2 293.4 39 295.8 38.1 298.4 37.7 301.1 37.6 303.9 38 306.7 38.7 309.5 39.7 312.1 41.1 314.6 42.9 317 44.9 319 47.1 320.8 49.6 322.3 52.2 323.4 54.8 324.1 57.6 324.4 60.3 324.4 62.9 323.9 65.4 323 67.7 321.8 69.8ZM132.3 151.1 134.1 149.6 136.3 148.4 138.7 147.5 141.3 147.1 144 147 146.8 147.3 149.6 148 152.3 149.1 155 150.5 157.5 152.3 159.8 154.3 161.9 156.5 163.7 159 165.1 161.5 166.2 164.2 167 166.9 167.3 169.6 167.2 172.3 166.8 174.8 165.9 177.1 164.7 179.2 163.1 181 161.2 182.5 159.1 183.7 156.7 184.6 154.1 185 151.4 185.1 148.6 184.7 145.8 184 143 183 140.4 181.6 137.9 179.8 135.5 177.8 133.5 175.6 131.7 173.1 130.2 170.5 129.1 167.9 128.4 165.1 128.1 162.4 128.1 159.8 128.6 157.3 129.5 155 130.7 152.9ZM132.3 204.9 130.7 203.1 129.5 201 128.6 198.7 128.1 196.2 128.1 193.6 128.4 190.9 129.1 188.1 130.2 185.5 131.7 182.9 133.5 180.4 135.5 178.2 137.9 176.2 140.4 174.4 143 173 145.8 172 148.6 171.3 151.4 170.9 154.1 171 156.7 171.4 159.1 172.3 161.2 173.5 163.1 175 164.7 176.8 165.9 178.9 166.8 181.2 167.2 183.7 167.3 186.4 167 189.1 166.2 191.8 165.1 194.5 163.7 197 161.9 199.5 159.8 201.7 157.5 203.7 155 205.5 152.3 206.9 149.6 208 146.8 208.7 144 209 141.3 208.9 138.7 208.5 136.3 207.6 134.1 206.4ZM187.7 151.1 189.3 152.9 190.5 155 191.4 157.3 191.9 159.8 191.9 162.4 191.6 165.1 190.9 167.9 189.8 170.5 188.3 173.1 186.5 175.6 184.5 177.8 182.1 179.8 179.6 181.6 177 183 174.2 184 171.4 184.7 168.6 185.1 165.9 185 163.3 184.6 160.9 183.7 158.8 182.5 156.9 181 155.3 179.2 154.1 177.1 153.2 174.8 152.8 172.3 152.7 169.6 153 166.9 153.8 164.2 154.9 161.5 156.3 159 158.1 156.5 160.2 154.3 162.5 152.3 165 150.5 167.7 149.1 170.4 148 173.2 147.3 176 147 178.7 147.1 181.3 147.5 183.7 148.4 185.9 149.6ZM187.7 204.9 185.9 206.4 183.7 207.6 181.3 208.5 178.7 208.9 176 209 173.2 208.7 170.4 208 167.7 206.9 165 205.5 162.5 203.7 160.2 201.7 158.1 199.5 156.3 197 154.9 194.5 153.8 191.8 153 189.1 152.7 186.4 152.8 183.7 153.2 181.2 154.1 178.9 155.3 176.8 156.9 175 158.8 173.5 160.9 172.3 163.3 171.4 165.9 171 168.6 170.9 171.4 171.3 174.2 172 177 173 179.6 174.4 182.1 176.2 184.5 178.2 186.5 180.4 188.3 182.9 189.8 185.5 190.9 188.1 191.6 190.9 191.9 193.6 191.9 196.2 191.4 198.7 190.5 201 189.3 203.1ZM-0.2 283.6 1.6 282.1 3.8 280.9 6.2 280 8.8 279.6 11.5 279.5 14.3 279.8 17.1 280.5 19.8 281.6 22.5 283 25 284.8 27.3 286.8 29.4 289 31.2 291.5 32.6 294 33.7 296.7 34.5 299.4 34.8 302.1 34.7 304.8 34.3 307.3 33.4 309.6 32.2 311.7 30.6 313.5 28.7 315 26.6 316.2 24.2 317.1 21.6 317.5 18.9 317.6 16.1 317.2 13.3 316.5 10.5 315.5 7.9 314.1 5.4 312.3 3 310.3 1 308.1 -0.8 305.6 -2.3 303 -3.4 300.4 -4.1 297.6 -4.4 294.9 -4.4 292.3 -3.9 289.8 -3 287.5 -1.8 285.4ZM-0.2 337.4 -1.8 335.6 -3 333.5 -3.9 331.2 -4.4 328.7 -4.4 326.1 -4.1 323.4 -3.4 320.6 -2.3 318 -0.8 315.4 1 312.9 3 310.7 5.4 308.7 7.9 306.9 10.5 305.5 13.3 304.5 16.1 303.8 18.9 303.4 21.6 303.5 24.2 303.9 26.6 304.8 28.7 306 30.6 307.5 32.2 309.3 33.4 311.4 34.3 313.7 34.7 316.2 34.8 318.9 34.5 321.6 33.7 324.3 32.6 327 31.2 329.5 29.4 332 27.3 334.2 25 336.2 22.5 338 19.8 339.4 17.1 340.5 14.3 341.2 11.5 341.5 8.8 341.4 6.2 341 3.8 340.1 1.6 338.9ZM55.2 283.6 56.8 285.4 58 287.5 58.9 289.8 59.4 292.3 59.4 294.9 59.1 297.6 58.4 300.4 57.3 303 55.8 305.6 54 308.1 52 310.3 49.6 312.3 47.1 314.1 44.5 315.5 41.7 316.5 38.9 317.2 36.1 317.6 33.4 317.5 30.8 317.1 28.4 316.2 26.3 315 24.4 313.5 22.8 311.7 21.6 309.6 20.7 307.3 20.3 304.8 20.2 302.1 20.5 299.4 21.3 296.7 22.4 294 23.8 291.5 25.6 289 27.7 286.8 30 284.8 32.5 283 35.2 281.6 37.9 280.5 40.7 279.8 43.5 279.5 46.2 279.6 48.8 280 51.2 280.9 53.4 282.1ZM55.2 337.4 53.4 338.9 51.2 340.1 48.8 341 46.2 341.4 43.5 341.5 40.7 341.2 37.9 340.5 35.2 339.4 32.5 338 30 336.2 27.7 334.2 25.6 332 23.8 329.5 22.4 327 21.3 324.3 20.5 321.6 20.2 318.9 20.3 316.2 20.7 313.7 21.6 311.4 22.8 309.3 24.4 307.5 26.3 306 28.4 304.8 30.8 303.9 33.4 303.5 36.1 303.4 38.9 303.8 41.7 304.5 44.5 305.5 47.1 306.9 49.6 308.7 52 310.7 54 312.9 55.8 315.4 57.3 318 58.4 320.6 59.1 323.4 59.4 326.1 59.4 328.7 58.9 331.2 58 333.5 56.8 335.6ZM65.7 283.6 67.5 282.1 69.7 280.9 72.1 280 74.7 279.6 77.4 279.5 80.2 279.8 83 280.5 85.7 281.6 88.4 283 90.9 284.8 93.2 286.8 95.3 289 97.1 291.5 98.5 294 99.6 296.7 100.4 299.4 100.7 302.1 100.6 304.8 100.2 307.3 99.3 309.6 98.1 311.7 96.5 313.5 94.6 315 92.5 316.2 90.1 317.1 87.5 317.5 84.8 317.6 82 317.2 79.2 316.5 76.4 315.5 73.8 314.1 71.3 312.3 68.9 310.3 66.9 308.1 65.1 305.6 63.6 303 62.5 300.4 61.8 297.6 61.5 294.9 61.5 292.3 62 289.8 62.9 287.5 64.1 285.4ZM65.7 337.4 64.1 335.6 62.9 333.5 62 331.2 61.5 328.7 61.5 326.1 61.8 323.4 62.5 320.6 63.6 318 65.1 315.4 66.9 312.9 68.9 310.7 71.3 308.7 73.8 306.9 76.4 305.5 79.2 304.5 82 303.8 84.8 303.4 87.5 303.5 90.1 303.9 92.5 304.8 94.6 306 96.5 307.5 98.1 309.3 99.3 311.4 100.2 313.7 100.6 316.2 100.7 318.9 100.4 321.6 99.6 324.3 98.5 327 97.1 329.5 95.3 332 93.2 334.2 90.9 336.2 88.4 338 85.7 339.4 83 340.5 80.2 341.2 77.4 341.5 74.7 341.4 72.1 341 69.7 340.1 67.5 338.9ZM121.1 283.6 122.7 285.4 123.9 287.5 124.8 289.8 125.3 292.3 125.3 294.9 125 297.6 124.3 300.4 123.2 303 121.7 305.6 119.9 308.1 117.9 310.3 115.5 312.3 113 314.1 110.4 315.5 107.6 316.5 104.8 317.2 102 317.6 99.3 317.5 96.7 317.1 94.3 316.2 92.2 315 90.3 313.5 88.7 311.7 87.5 309.6 86.6 307.3 86.2 304.8 86.1 302.1 86.4 299.4 87.2 296.7 88.3 294 89.7 291.5 91.5 289 93.6 286.8 95.9 284.8 98.4 283 101.1 281.6 103.8 280.5 106.6 279.8 109.4 279.5 112.1 279.6 114.7 280 117.1 280.9 119.3 282.1ZM121.1 337.4 119.3 338.9 117.1 340.1 114.7 341 112.1 341.4 109.4 341.5 106.6 341.2 103.8 340.5 101.1 339.4 98.4 338 95.9 336.2 93.6 334.2 91.5 332 89.7 329.5 88.3 327 87.2 324.3 86.4 321.6 86.1 318.9 86.2 316.2 86.6 313.7 87.5 311.4 88.7 309.3 90.3 307.5 92.2 306 94.3 304.8 96.7 303.9 99.3 303.5 102 303.4 104.8 303.8 107.6 304.5 110.4 305.5 113 306.9 115.5 308.7 117.9 310.7 119.9 312.9 121.7 315.4 123.2 318 124.3 320.6 125 323.4 125.3 326.1 125.3 328.7 124.8 331.2 123.9 333.5 122.7 335.6ZM327.7 174.3 390.5 174.3 390.5 181.5 327.7 181.5ZM339.6 153.9 383.9 196.8 378.6 201.9 334.3 159ZM362.8 147.6 362.8 208.2 355.4 208.2 355.4 147.6ZM383.9 159 339.6 201.9 334.3 196.8 378.6 153.9ZM261.1 240.9 323.9 240.9 323.9 248.1 261.1 248.1ZM273 220.5 317.3 263.4 312 268.5 267.7 225.6ZM296.2 214.2 296.2 274.8 288.8 274.8 288.8 214.2ZM317.3 225.6 273 268.5 267.7 263.4 312 220.5ZM327.4 307.4 390.1 307.4 390.1 314.6 327.4 314.6ZM339.2 287 383.6 329.9 378.3 335 333.9 292.1ZM362.5 280.7 362.5 341.3 355 341.3 355 280.7ZM383.6 292.1 339.2 335 333.9 329.9 378.3 287ZM194.5 376.2 257.3 376.2 257.3 383.4 194.5 383.4ZM206.4 355.8 250.7 398.7 245.4 403.8 201.1 360.9ZM229.6 349.5 229.6 410.1 222.2 410.1 222.2 349.5ZM250.7 360.9 206.4 403.8 201.1 398.7 245.4 355.8ZM459.6 306.8 522.4 306.8 522.4 314 459.6 314ZM471.5 286.4 515.8 329.3 510.5 334.4 466.2 291.5ZM494.7 280.1 494.7 340.7 487.3 340.7 487.3 280.1ZM515.8 291.5 471.5 334.4 466.2 329.3 510.5 286.4ZM61.9 80.9 66.1 80.9 66.1 85.1 61.9 85.1ZM76.9 80.9 81.1 80.9 81.1 85.1 76.9 85.1ZM90.9 80.9 95.1 80.9 95.1 85.1 90.9 85.1ZM105.9 80.9 110.1 80.9 110.1 85.1 105.9 85.1ZM120.4 80.9 124.6 80.9 124.6 85.1 120.4 85.1ZM61.9 94.9 66.1 94.9 66.1 99.1 61.9 99.1ZM76.9 94.9 81.1 94.9 81.1 99.1 76.9 99.1ZM90.9 94.9 95.1 94.9 95.1 99.1 90.9 99.1ZM105.9 94.9 110.1 94.9 110.1 99.1 105.9 99.1ZM120.4 94.9 124.6 94.9 124.6 99.1 120.4 99.1ZM61.9 109.4 66.1 109.4 66.1 113.6 61.9 113.6ZM76.9 109.4 81.1 109.4 81.1 113.6 76.9 113.6ZM90.9 109.4 95.1 109.4 95.1 113.6 90.9 113.6ZM105.9 109.4 110.1 109.4 110.1 113.6 105.9 113.6ZM120.4 109.4 124.6 109.4 124.6 113.6 120.4 113.6ZM61.9 123.4 66.1 123.4 66.1 127.6 61.9 127.6ZM76.9 123.4 81.1 123.4 81.1 127.6 76.9 127.6ZM90.9 123.4 95.1 123.4 95.1 127.6 90.9 127.6ZM105.9 123.4 110.1 123.4 110.1 127.6 105.9 127.6ZM120.4 123.4 124.6 123.4 124.6 127.6 120.4 127.6ZM61.9 137.9 66.1 137.9 66.1 142.1 61.9 142.1ZM76.9 137.9 81.1 137.9 81.1 142.1 76.9 142.1ZM90.9 137.9 95.1 137.9 95.1 142.1 90.9 142.1ZM105.9 137.9 110.1 137.9 110.1 142.1 105.9 142.1ZM120.4 137.9 124.6 137.9 124.6 142.1 120.4 142.1ZM260.9 80.4 265.1 80.4 265.1 84.6 260.9 84.6ZM275.4 80.4 279.6 80.4 279.6 84.6 275.4 84.6ZM289.9 80.4 294.1 80.4 294.1 84.6 289.9 84.6ZM304.6 80.4 308.9 80.4 308.9 84.6 304.6 84.6ZM319.4 80.4 323.6 80.4 323.6 84.6 319.4 84.6ZM260.9 94.9 265.1 94.9 265.1 99.1 260.9 99.1ZM275.4 94.9 279.6 94.9 279.6 99.1 275.4 99.1ZM289.9 94.9 294.1 94.9 294.1 99.1 289.9 99.1ZM304.6 94.9 308.9 94.9 308.9 99.1 304.6 99.1ZM319.4 94.9 323.6 94.9 323.6 99.1 319.4 99.1ZM260.9 109.4 265.1 109.4 265.1 113.6 260.9 113.6ZM275.4 109.4 279.6 109.4 279.6 113.6 275.4 113.6ZM289.9 109.4 294.1 109.4 294.1 113.6 289.9 113.6ZM304.6 109.4 308.9 109.4 308.9 113.6 304.6 113.6ZM319.4 109.4 323.6 109.4 323.6 113.6 319.4 113.6ZM260.9 123.4 265.1 123.4 265.1 127.6 260.9 127.6ZM275.4 123.4 279.6 123.4 279.6 127.6 275.4 127.6ZM289.9 123.4 294.1 123.4 294.1 127.6 289.9 127.6ZM304.6 123.4 308.9 123.4 308.9 127.6 304.6 127.6ZM319.4 123.4 323.6 123.4 323.6 127.6 319.4 127.6ZM260.9 137.9 265.1 137.9 265.1 142.1 260.9 142.1ZM275.4 137.9 279.6 137.9 279.6 142.1 275.4 142.1ZM289.9 137.9 294.1 137.9 294.1 142.1 289.9 142.1ZM304.6 137.9 308.9 137.9 308.9 142.1 304.6 142.1ZM319.4 137.9 323.6 137.9 323.6 142.1 319.4 142.1ZM393.6 13.9 397.9 13.9 397.9 18.1 393.6 18.1ZM407.9 13.9 412.1 13.9 412.1 18.1 407.9 18.1ZM422.9 13.9 427.1 13.9 427.1 18.1 422.9 18.1ZM437.4 13.9 441.6 13.9 441.6 18.1 437.4 18.1ZM451.9 13.9 456.1 13.9 456.1 18.1 451.9 18.1ZM393.6 27.9 397.9 27.9 397.9 32.1 393.6 32.1ZM407.9 27.9 412.1 27.9 412.1 32.1 407.9 32.1ZM422.9 27.9 427.1 27.9 427.1 32.1 422.9 32.1ZM437.4 27.9 441.6 27.9 441.6 32.1 437.4 32.1ZM451.9 27.9 456.1 27.9 456.1 32.1 451.9 32.1ZM393.6 42.9 397.9 42.9 397.9 47.1 393.6 47.1ZM407.9 42.9 412.1 42.9 412.1 47.1 407.9 47.1ZM422.9 42.9 427.1 42.9 427.1 47.1 422.9 47.1ZM437.4 42.9 441.6 42.9 441.6 47.1 437.4 47.1ZM451.9 42.9 456.1 42.9 456.1 47.1 451.9 47.1ZM393.6 57.1 397.9 57.1 397.9 61.3 393.6 61.3ZM407.9 57.1 412.1 57.1 412.1 61.3 407.9 61.3ZM422.9 57.1 427.1 57.1 427.1 61.3 422.9 61.3ZM437.4 57.1 441.6 57.1 441.6 61.3 437.4 61.3ZM451.9 57.1 456.1 57.1 456.1 61.3 451.9 61.3ZM393.6 71.5 397.9 71.5 397.9 75.7 393.6 75.7ZM407.9 71.5 412.1 71.5 412.1 75.7 407.9 75.7ZM422.9 71.5 427.1 71.5 427.1 75.7 422.9 75.7ZM437.4 71.5 441.6 71.5 441.6 75.7 437.4 75.7ZM451.9 71.5 456.1 71.5 456.1 75.7 451.9 75.7ZM393.6 80.9 397.9 80.9 397.9 85.1 393.6 85.1ZM407.9 80.9 412.1 80.9 412.1 85.1 407.9 85.1ZM422.9 80.9 427.1 80.9 427.1 85.1 422.9 85.1ZM437.4 80.9 441.6 80.9 441.6 85.1 437.4 85.1ZM451.9 80.9 456.1 80.9 456.1 85.1 451.9 85.1ZM393.6 95.1 397.9 95.1 397.9 99.3 393.6 99.3ZM407.9 95.1 412.1 95.1 412.1 99.3 407.9 99.3ZM422.9 95.1 427.1 95.1 427.1 99.3 422.9 99.3ZM437.4 95.1 441.6 95.1 441.6 99.3 437.4 99.3ZM451.9 95.1 456.1 95.1 456.1 99.3 451.9 99.3ZM393.6 109.3 397.9 109.3 397.9 113.5 393.6 113.5ZM407.9 109.3 412.1 109.3 412.1 113.5 407.9 113.5ZM422.9 109.3 427.1 109.3 427.1 113.5 422.9 113.5ZM437.4 109.3 441.6 109.3 441.6 113.5 437.4 113.5ZM451.9 109.3 456.1 109.3 456.1 113.5 451.9 113.5ZM393.6 123.6 397.9 123.6 397.9 127.8 393.6 127.8ZM407.9 123.6 412.1 123.6 412.1 127.8 407.9 127.8ZM422.9 123.6 427.1 123.6 427.1 127.8 422.9 127.8ZM437.4 123.6 441.6 123.6 441.6 127.8 437.4 127.8ZM451.9 123.6 456.1 123.6 456.1 127.8 451.9 127.8ZM393.6 138.1 397.9 138.1 397.9 142.3 393.6 142.3ZM407.9 138.1 412.1 138.1 412.1 142.3 407.9 142.3ZM422.9 138.1 427.1 138.1 427.1 142.3 422.9 142.3ZM437.4 138.1 441.6 138.1 441.6 142.3 437.4 142.3ZM451.9 138.1 456.1 138.1 456.1 142.3 451.9 142.3ZM-4.6 213.4 -0.4 213.4 -0.4 217.6 -4.6 217.6ZM9.9 213.4 14.1 213.4 14.1 217.6 9.9 217.6ZM24.6 213.4 28.9 213.4 28.9 217.6 24.6 217.6ZM39.1 213.4 43.4 213.4 43.4 217.6 39.1 217.6ZM53.9 213.4 58.1 213.4 58.1 217.6 53.9 217.6ZM-4.6 227.9 -0.4 227.9 -0.4 232.1 -4.6 232.1ZM9.9 227.9 14.1 227.9 14.1 232.1 9.9 232.1ZM24.6 227.9 28.9 227.9 28.9 232.1 24.6 232.1ZM39.1 227.9 43.4 227.9 43.4 232.1 39.1 232.1ZM53.9 227.9 58.1 227.9 58.1 232.1 53.9 232.1ZM-4.6 241.9 -0.4 241.9 -0.4 246.1 -4.6 246.1ZM9.9 241.9 14.1 241.9 14.1 246.1 9.9 246.1ZM24.6 241.9 28.9 241.9 28.9 246.1 24.6 246.1ZM39.1 241.9 43.4 241.9 43.4 246.1 39.1 246.1ZM53.9 241.9 58.1 241.9 58.1 246.1 53.9 246.1ZM-4.6 256.4 -0.4 256.4 -0.4 260.6 -4.6 260.6ZM9.9 256.4 14.1 256.4 14.1 260.6 9.9 260.6ZM24.6 256.4 28.9 256.4 28.9 260.6 24.6 260.6ZM39.1 256.4 43.4 256.4 43.4 260.6 39.1 260.6ZM53.9 256.4 58.1 256.4 58.1 260.6 53.9 260.6ZM-4.6 270.9 -0.4 270.9 -0.4 275.1 -4.6 275.1ZM9.9 270.9 14.1 270.9 14.1 275.1 9.9 275.1ZM24.6 270.9 28.9 270.9 28.9 275.1 24.6 275.1ZM39.1 270.9 43.4 270.9 43.4 275.1 39.1 275.1ZM53.9 270.9 58.1 270.9 58.1 275.1 53.9 275.1ZM128.1 279.9 132.3 279.9 132.3 284.1 128.1 284.1ZM142.9 279.9 147.1 279.9 147.1 284.1 142.9 284.1ZM157.7 279.9 161.9 279.9 161.9 284.1 157.7 284.1ZM172.3 279.9 176.5 279.9 176.5 284.1 172.3 284.1ZM187.1 279.9 191.3 279.9 191.3 284.1 187.1 284.1ZM128.1 294.1 132.3 294.1 132.3 298.3 128.1 298.3ZM142.9 294.1 147.1 294.1 147.1 298.3 142.9 298.3ZM157.7 294.1 161.9 294.1 161.9 298.3 157.7 298.3ZM172.3 294.1 176.5 294.1 176.5 298.3 172.3 298.3ZM187.1 294.1 191.3 294.1 191.3 298.3 187.1 298.3ZM128.1 308.4 132.3 308.4 132.3 312.6 128.1 312.6ZM142.9 308.4 147.1 308.4 147.1 312.6 142.9 312.6ZM157.7 308.4 161.9 308.4 161.9 312.6 157.7 312.6ZM172.3 308.4 176.5 308.4 176.5 312.6 172.3 312.6ZM187.1 308.4 191.3 308.4 191.3 312.6 187.1 312.6ZM128.1 322.5 132.3 322.5 132.3 326.7 128.1 326.7ZM142.9 322.5 147.1 322.5 147.1 326.7 142.9 326.7ZM157.7 322.5 161.9 322.5 161.9 326.7 157.7 326.7ZM172.3 322.5 176.5 322.5 176.5 326.7 172.3 326.7ZM187.1 322.5 191.3 322.5 191.3 326.7 187.1 326.7ZM128.1 336.9 132.3 336.9 132.3 341.1 128.1 341.1ZM142.9 336.9 147.1 336.9 147.1 341.1 142.9 341.1ZM157.7 336.9 161.9 336.9 161.9 341.1 157.7 341.1ZM172.3 336.9 176.5 336.9 176.5 341.1 172.3 341.1ZM187.1 336.9 191.3 336.9 191.3 341.1 187.1 341.1ZM459.7 147.2 463.9 147.2 463.9 151.4 459.7 151.4ZM474.3 147.2 478.5 147.2 478.5 151.4 474.3 151.4ZM488.9 147.2 493.1 147.2 493.1 151.4 488.9 151.4ZM503.4 147.2 507.6 147.2 507.6 151.4 503.4 151.4ZM517.9 147.2 522.1 147.2 522.1 151.4 517.9 151.4ZM459.7 161.4 463.9 161.4 463.9 165.6 459.7 165.6ZM474.3 161.4 478.5 161.4 478.5 165.6 474.3 165.6ZM488.9 161.4 493.1 161.4 493.1 165.6 488.9 165.6ZM503.4 161.4 507.6 161.4 507.6 165.6 503.4 165.6ZM517.9 161.4 522.1 161.4 522.1 165.6 517.9 165.6ZM459.7 175.7 463.9 175.7 463.9 179.9 459.7 179.9ZM474.3 175.7 478.5 175.7 478.5 179.9 474.3 179.9ZM488.9 175.7 493.1 175.7 493.1 179.9 488.9 179.9ZM503.4 175.7 507.6 175.7 507.6 179.9 503.4 179.9ZM517.9 175.7 522.1 175.7 522.1 179.9 517.9 179.9ZM459.7 190.1 463.9 190.1 463.9 194.3 459.7 194.3ZM474.3 190.1 478.5 190.1 478.5 194.3 474.3 194.3ZM488.9 190.1 493.1 190.1 493.1 194.3 488.9 194.3ZM503.4 190.1 507.6 190.1 507.6 194.3 503.4 194.3ZM517.9 190.1 522.1 190.1 522.1 194.3 517.9 194.3ZM459.7 204.5 463.9 204.5 463.9 208.7 459.7 208.7ZM474.3 204.5 478.5 204.5 478.5 208.7 474.3 208.7ZM488.9 204.5 493.1 204.5 493.1 208.7 488.9 208.7ZM503.4 204.5 507.6 204.5 507.6 208.7 503.4 208.7ZM517.9 204.5 522.1 204.5 522.1 208.7 517.9 208.7ZM459.7 346.3 463.9 346.3 463.9 350.5 459.7 350.5ZM474.3 346.3 478.5 346.3 478.5 350.5 474.3 350.5ZM488.9 346.3 493.1 346.3 493.1 350.5 488.9 350.5ZM503.4 346.3 507.6 346.3 507.6 350.5 503.4 350.5ZM517.9 346.3 522.1 346.3 522.1 350.5 517.9 350.5ZM459.7 360.6 463.9 360.6 463.9 364.8 459.7 364.8ZM474.3 360.6 478.5 360.6 478.5 364.8 474.3 364.8ZM488.9 360.6 493.1 360.6 493.1 364.8 488.9 364.8ZM503.4 360.6 507.6 360.6 507.6 364.8 503.4 364.8ZM517.9 360.6 522.1 360.6 522.1 364.8 517.9 364.8ZM459.7 374.7 463.9 374.7 463.9 378.9 459.7 378.9ZM474.3 374.7 478.5 374.7 478.5 378.9 474.3 378.9ZM488.9 374.7 493.1 374.7 493.1 378.9 488.9 378.9ZM503.4 374.7 507.6 374.7 507.6 378.9 503.4 378.9ZM517.9 374.7 522.1 374.7 522.1 378.9 517.9 378.9ZM459.7 388.9 463.9 388.9 463.9 393.1 459.7 393.1ZM474.3 388.9 478.5 388.9 478.5 393.1 474.3 393.1ZM488.9 388.9 493.1 388.9 493.1 393.1 488.9 393.1ZM503.4 388.9 507.6 388.9 507.6 393.1 503.4 393.1ZM517.9 388.9 522.1 388.9 522.1 393.1 517.9 393.1ZM459.7 403.2 463.9 403.2 463.9 407.4 459.7 407.4ZM474.3 403.2 478.5 403.2 478.5 407.4 474.3 407.4ZM488.9 403.2 493.1 403.2 493.1 407.4 488.9 407.4ZM503.4 403.2 507.6 403.2 507.6 407.4 503.4 407.4ZM517.9 403.2 522.1 403.2 522.1 407.4 517.9 407.4Z"/>
<circle cx="27" cy="178" r="33"/>
<circle cx="292.5" cy="178" r="33"/>
<circle cx="226.1" cy="310.7" r="33.1"/>
<circle cx="293" cy="311" r="33"/>
<circle cx="27" cy="377" r="33"/>
</g>
</g>
</svg>
<div id="topline" class="abs"></div><div id="topline2" class="abs"></div>
<div id="gutter" class="abs"></div>
<div id="rtop" class="abs"></div>
<svg class="abs" style="left:505px;top:3px" width="110" height="13" viewBox="505 3 110 13" fill="#bdbdbd">
  <!-- |<  -->
  <rect x="509.5" y="5" width="1.6" height="8.6"/><path d="M519.5 5L519.5 13.6L511.6 9.3Z"/>
  <!-- <| -->
  <path d="M538 5L538 13.6L530 9.3Z"/><rect x="539.2" y="5" width="1.6" height="8.6"/>
  <!-- play -->
  <path d="M553 4.8L553 13.8L561.5 9.3Z"/>
  <!-- |> -->
  <rect x="573.2" y="5" width="1.6" height="8.6"/><path d="M576 5L576 13.6L584 9.3Z"/>
  <!-- >| -->
  <path d="M595.5 5L595.5 13.6L603.4 9.3Z"/><rect x="603.9" y="5" width="1.6" height="8.6"/>
</svg>
<div id="win" class="abs"></div>
<div id="hdrline" class="abs"></div>
<div class="tl" style="left:479.7px"></div>
<div class="abs" style="left:483.8px;top:33.6px;width:4.3px;height:4.3px;border-radius:50%;background:#c4c4c4"></div>
<div class="tl" style="left:500.3px"></div>
<div class="tl" style="left:520.8px"></div>
<svg class="abs" style="left:546px;top:29px" width="14" height="14" viewBox="0 0 14 14"><path d="M2.5 1.5h9a1.5 1.5 0 0 1 1.5 1.5v5a1.5 1.5 0 0 1 -1.5 1.5h-5.5l-2.5 2.6v-2.6h-1a1.5 1.5 0 0 1 -1.5 -1.5v-5a1.5 1.5 0 0 1 1.5 -1.5z" fill="#6a6a6a"/></svg>
<svg class="abs" style="left:568px;top:30px" width="14" height="12" viewBox="0 0 14 12"><path d="M6 1.5L1.5 6L6 10.5M1.5 6H12.5" fill="none" stroke="#6e6e6e" stroke-width="1.2"/></svg>
<svg class="abs" style="left:590px;top:30px" width="14" height="12" viewBox="0 0 14 12"><path d="M8 1.5L12.5 6L8 10.5M12.5 6H1.5" fill="none" stroke="#3a3a3a" stroke-width="1.2"/></svg>
<div id="title" class="abs">ae-mcp</div>
<svg class="abs" style="left:480px;top:62px" width="13" height="11" viewBox="0 0 13 11"><rect x="0.6" y="0.6" width="11.8" height="9.3" rx="1.8" fill="none" stroke="#7a7a7a" stroke-width="1.1"/><rect x="1.4" y="1.4" width="3.2" height="7.7" fill="#686868"/></svg>
<div id="tab1" class="abs">물리 시뮬레이션 적용</div>
<div id="tab2bg" class="abs"><div id="tab2" class="abs">세션 지시 사항</div></div>
<svg class="abs" style="left:671px;top:61.6px" width="12" height="12" viewBox="0 0 12 12"><path d="M6 1.2V10.8M1.2 6H10.8" stroke="#909090" stroke-width="1" fill="none"/></svg>
<svg class="abs" style="left:692.6px;top:61.6px" width="12" height="12" viewBox="0 0 12 12"><circle cx="6" cy="6" r="5.2" fill="none" stroke="#8c8c8c" stroke-width="1"/><path d="M6 3V6.2L8 7.2" fill="none" stroke="#8c8c8c" stroke-width="1"/></svg>
<div class="abs" style="left:715.5px;top:66.5px;width:2px;height:2px;border-radius:50%;background:#8c8c8c"></div>
<div class="abs" style="left:719.5px;top:66.5px;width:2px;height:2px;border-radius:50%;background:#8c8c8c"></div>
<div id="msg" class="abs"></div>
<div id="msgtext" class="abs">주어진 아이콘들을 기반으로 화면가득 그리드 배치<br>해줘. 그리고 각각 겹치지 않게 슬라이딩 방식으로<br>애니메이션을 만들어줘.</div>
<div id="faint" class="abs"></div>
<div class="fm" style="left:488px;width:7px"></div><div class="fm" style="left:497px;width:12px"></div><div class="fm" style="left:533px;width:12px"></div><div class="fm" style="left:550px;width:8px"></div><div class="fm" style="left:562px;width:9px"></div><div class="fm" style="left:575px;width:8px"></div><div class="fm" style="left:590px;width:2px"></div><div class="fm" style="left:601px;width:5px"></div>
</body>
</html>
